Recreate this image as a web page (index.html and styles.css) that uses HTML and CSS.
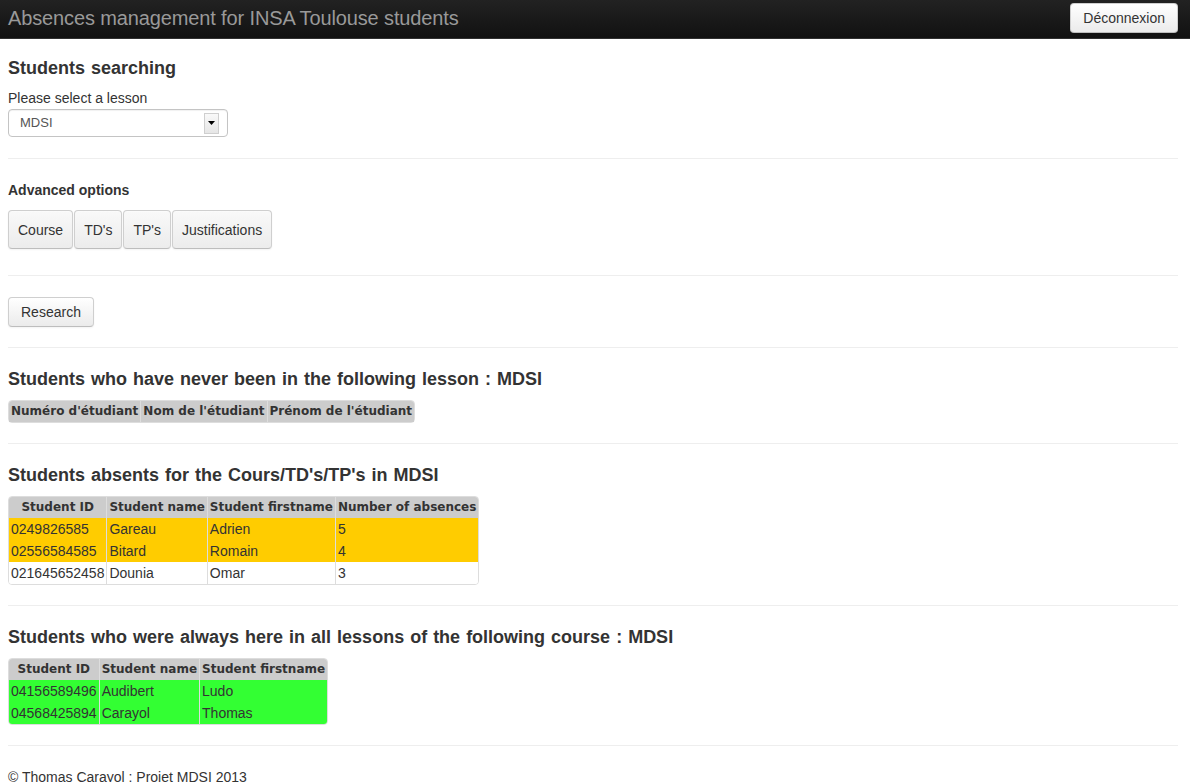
FILE: index.html
```html
<!DOCTYPE html>
<html lang="en">
<head>
<meta charset="utf-8">
<title>Absences management for INSA Toulouse students</title>
<link rel="stylesheet" href="styles.css">
</head>
<body>
<header class="navbar">
  <span class="brand">Absences management for INSA Toulouse students</span>
  <button class="btn btn-logout" type="button">Déconnexion</button>
</header>
<main class="content">
  <h4 class="title title-first">Students searching</h4>
  <label class="field-label">Please select a lesson</label>
  <div class="select">
    <span class="select-value">MDSI</span>
    <span class="select-arrow"><svg width="7" height="4" viewBox="0 0 7 4"><path d="M0 0H7L3.5 4Z" fill="#000"/></svg></span>
  </div>
  <hr class="sep">
  <h5 class="subtitle">Advanced options</h5>
  <div class="btn-group">
    <button class="btn btn-option" type="button">Course</button>
    <button class="btn btn-option" type="button">TD's</button>
    <button class="btn btn-option" type="button">TP's</button>
    <button class="btn btn-option" type="button">Justifications</button>
  </div>
  <hr class="sep">
  <button class="btn btn-research" type="button">Research</button>
  <hr class="sep">
  <h4 class="title">Students who have never been in the following lesson : MDSI</h4>
  <table class="data">
    <thead>
      <tr><th>Numéro d'étudiant</th><th>Nom de l'étudiant</th><th>Prénom de l'étudiant</th></tr>
    </thead>
  </table>
  <hr class="sep">
  <h4 class="title">Students absents for the Cours/TD's/TP's in MDSI</h4>
  <table class="data">
    <thead>
      <tr><th>Student ID</th><th>Student name</th><th>Student firstname</th><th>Number of absences</th></tr>
    </thead>
    <tbody>
      <tr class="row-warn"><td>0249826585</td><td>Gareau</td><td>Adrien</td><td>5</td></tr>
      <tr class="row-warn"><td>02556584585</td><td>Bitard</td><td>Romain</td><td>4</td></tr>
      <tr class="row-plain"><td>021645652458</td><td>Dounia</td><td>Omar</td><td>3</td></tr>
    </tbody>
  </table>
  <hr class="sep">
  <h4 class="title">Students who were always here in all lessons of the following course : MDSI</h4>
  <table class="data">
    <thead>
      <tr><th>Student ID</th><th>Student name</th><th>Student firstname</th></tr>
    </thead>
    <tbody>
      <tr class="row-ok"><td>04156589496</td><td>Audibert</td><td>Ludo</td></tr>
      <tr class="row-ok"><td>04568425894</td><td>Carayol</td><td>Thomas</td></tr>
    </tbody>
  </table>
  <hr class="sep">
  <footer class="footer">© Thomas Carayol : Projet MDSI 2013</footer>
</main>
</body>
</html>
```
FILE: styles.css
```css
* { box-sizing: border-box; }

html, body {
  margin: 0;
  padding: 0;
  background: #fff;
}

body {
  font-family: "Liberation Sans", Arial, Helvetica, sans-serif;
  font-size: 14px;
  line-height: 20px;
  color: #333;
}

/* Navbar */
.navbar {
  height: 39px;
  display: flex;
  justify-content: space-between;
  align-items: flex-start;
  padding: 0 12px 0 8px;
  background: linear-gradient(to bottom, #222 0%, #111 100%);
  border-bottom: 1px solid #303030;
}

.brand {
  margin-top: 8px;
  font-size: 20px;
  line-height: 20px;
  letter-spacing: -0.13px;
  color: #999;
}

/* Buttons */
.btn {
  font-family: "Liberation Sans", Arial, Helvetica, sans-serif;
  font-size: 14px;
  line-height: 20px;
  color: #333;
  background: linear-gradient(to bottom, #ffffff 0%, #ebebeb 100%);
  border: 1px solid #cfcfcf;
  border-bottom-color: #bdbdbd;
  border-radius: 4px;
  box-shadow: inset 0 1px 0 rgba(255,255,255,.3), 0 1px 2px rgba(0,0,0,.05);
  cursor: pointer;
  margin: 0;
}

.btn-logout {
  margin-top: 3px;
  height: 30px;
  padding: 0 12px;
}

.btn-group {
  display: flex;
  gap: 1px;
  margin-bottom: 6px;
}

.btn-option {
  height: 39px;
  padding: 0 9px;
  background: linear-gradient(to bottom, #f9f9f9 0%, #ececec 100%);
}

.btn-research {
  height: 30px;
  padding: 0 12px;
}

/* Content */
.content {
  display: flex;
  flex-direction: column;
  align-items: flex-start;
  padding: 19px 12px 0 8px;
}

.title {
  margin: 0 0 11px;
  font-size: 18px;
  line-height: 20px;
  font-weight: bold;
  word-spacing: 1px;
  color: #333;
}

.title-first {
  margin-bottom: 10px;
}

.subtitle {
  margin: 0 0 10px;
  font-size: 14px;
  line-height: 20px;
  font-weight: bold;
  color: #333;
}

.field-label {
  display: block;
  line-height: 20px;
}

.select {
  margin-top: 1px;
  margin-bottom: 1px;
  width: 220px;
  height: 28px;
  display: flex;
  align-items: center;
  justify-content: space-between;
  border: 1px solid #c4c4c4;
  border-radius: 4px;
  background: #fff;
  padding: 0 8px 0 11px;
  box-shadow: inset 0 1px 1px rgba(0,0,0,.06);
}

.select-value {
  font-size: 13px;
  color: #555;
}

.select-arrow {
  width: 15px;
  height: 21px;
  display: flex;
  align-items: center;
  justify-content: center;
  border: 1px solid #cfcfcf;
  background: linear-gradient(to bottom, #f9f9f9, #e6e6e6);
}

.select-arrow svg { display: block; }

hr.sep {
  align-self: stretch;
  margin: 20px 0;
  height: 0;
  border: 0;
  border-top: 1px solid #eee;
  border-bottom: 1px solid #fff;
}

/* Tables */
.data {
  border-collapse: separate;
  border-spacing: 0;
  border: 1px solid #ddd;
  border-radius: 4px;
}

.data th {
  font-family: "DejaVu Sans", Verdana, sans-serif;
  font-size: 12px;
  font-weight: bold;
  color: #333;
  background: #cccccc;
  height: 21px;
  line-height: 21px;
  padding: 0 2px;
  text-align: center;
  white-space: nowrap;
}

.data thead tr th:first-child { border-top-left-radius: 3px; }
.data thead tr th:last-child { border-top-right-radius: 3px; }

.data td {
  height: 22px;
  line-height: 22px;
  padding: 0 2px;
  text-align: left;
  white-space: nowrap;
  color: #333;
}

.data th + th,
.data td + td {
  border-left: 1px solid #ddd;
}

.data tbody tr:last-child td:first-child { border-bottom-left-radius: 3px; }
.data tbody tr:last-child td:last-child { border-bottom-right-radius: 3px; }

.row-warn td { background: #ffcc00; }
.row-plain td { background: #fff; }
.row-ok td { background: #33ff33; }

.footer {
  line-height: 20px;
  color: #333;
}
```
